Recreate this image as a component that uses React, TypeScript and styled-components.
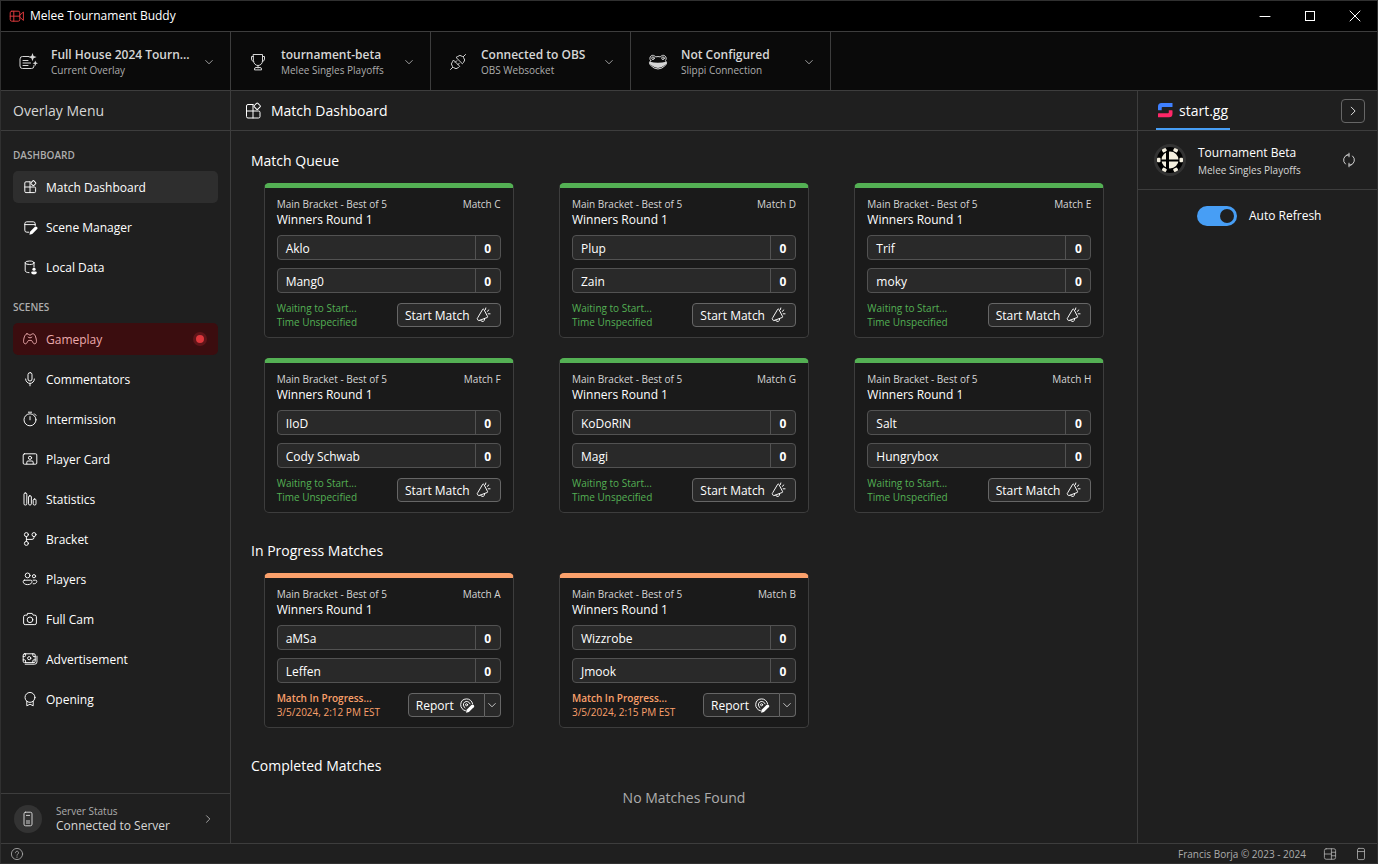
import React from "react";
import styled, { createGlobalStyle, css } from "styled-components";

const line = "#3d3d3d";
const green = "#54b054";
const orange = "#faa06b";

const GlobalStyle = createGlobalStyle`
  * { box-sizing: border-box; }
  body {
    margin: 0;
    background: #1f1f1f;
    color: #ffffff;
    font-family: "Segoe UI", "Open Sans", "Noto Sans", sans-serif;
    font-size: 12px;
    line-height: 16px;
  }
  button { font: inherit; color: inherit; cursor: pointer; }
  h1, h2, h3, p, ul { margin: 0; padding: 0; font-weight: 400; }
  ul { list-style: none; }
`;

/* ---------- icons ---------- */

const Svg = styled.svg<{ $size: number }>`
  width: ${(p) => p.$size}px;
  height: ${(p) => p.$size}px;
  flex: none;
  display: block;
  fill: none;
  stroke: currentColor;
  stroke-width: ${(p) => (p.$size < 20 ? 1.2 : 1)};
  stroke-linecap: round;
  stroke-linejoin: round;
  .solid { fill: currentColor; stroke: none; }
`;

const shapes = {
  recorder: (
    <>
      <rect x="1.500" y="4" width="12" height="12.500" rx="2" />
      <path d="M6 4v12.500M1.500 10.200h12M13.500 9l4.500-4v10.500l-4.500-4" />
    </>
  ),
  overlay: (
    <>
      <path d="M11 4.500H4.500a2.500 2.500 0 0 0-2.500 2.500v7a2.500 2.500 0 0 0 2.500 2.500h9a2.500 2.500 0 0 0 2.500-2.500v-.5M5 8.500h5M5 11h7.500M5 13.500h5" />
      <path className="solid" d="M14.500 1l1.100 3 3 1.100-3 1.100-1.100 3-1.100-3-3-1.100 3-1.100zM17.300 8.500l.8 2 2 .8-2 .8-.8 2-.8-2-2-.8 2-.8z" />
    </>
  ),
  trophy: (
    <path d="M5.500 2.500h9V9a4.500 4.500 0 0 1-9 0zM5.500 4.500H3.500v2.500a2.500 2.500 0 0 0 2.200 2.500M14.500 4.500h2v2.500a2.500 2.500 0 0 1-2.200 2.500M10 13.500v2.500M6.500 17.500v-.5a1.500 1.500 0 0 1 1.500-1.500h4a1.500 1.500 0 0 1 1.500 1.500v.5z" />
  ),
  plug: (
    <path d="M2.500 17.500l2.200-2.200M17.500 2.500l-2.200 2.200M5.700 8.300l6 6-1.200 1.200a3.600 3.600 0 0 1-5 0l-1-1a3.600 3.600 0 0 1 0-5zM8.300 5.700l6 6 1.200-1.200a3.600 3.600 0 0 0 0-5l-1-1a3.600 3.600 0 0 0-5 0zM7.300 10.200l1.500-1.500M9.800 12.700l1.500-1.500" />
  ),
  frog: (
    <>
      <path d="M2.600 8.500a3.100 3.100 0 1 1 5-3.600q2.400-.7 4.800 0a3.100 3.100 0 1 1 5 3.600q2.400 2.300.3 4.600Q14 17 10 17t-7.700-3.900Q.2 10.800 2.600 8.500z" />
      <circle cx="5" cy="6.200" r="1.300" />
      <circle cx="15" cy="6.200" r="1.300" />
      <path className="solid" d="M1.800 9.800q8.200 1.800 16.400 0 1 1.500-.9 3Q13.500 16 10 16t-7.300-3.200q-1.900-1.500-.9-3z" />
    </>
  ),
  dashboard: (
    <>
      <path d="M10 3.500H5A1.500 1.500 0 0 0 3.500 5v10.500A1.500 1.500 0 0 0 5 17h10.500a1.500 1.500 0 0 0 1.500-1.500v-4a1.500 1.500 0 0 0-1.500-1.500h-12M10 3.500V17" />
      <rect x="11.700" y="2.700" width="5" height="5" rx="1" transform="rotate(45 14.200 5.200)" />
    </>
  ),
  sceneEdit: (
    <>
      <path d="M8.500 16.500H6A2.500 2.500 0 0 1 3.500 14V6A2.500 2.500 0 0 1 6 3.500h8A2.500 2.500 0 0 1 16.500 6v2.500M3.500 7h13" />
      <path className="solid" d="M10 15.800l5.800-5.800a1.900 1.900 0 0 1 2.900 2.900L12.800 18.700l-3.500.9z" />
    </>
  ),
  database: (
    <>
      <ellipse cx="9.500" cy="4.700" rx="5.500" ry="2.200" />
      <path d="M4 4.700v10c0 1.300 2 2.300 4.800 2.400M15 4.700v4.800" />
      <circle className="solid" cx="15" cy="12.700" r="2" />
      <path className="solid" d="M11.500 17a1.500 1.500 0 0 1 1.500-1.500h4a1.500 1.500 0 0 1 1.500 1.500c0 1.500-1.500 2.500-3.500 2.500S11.500 18.500 11.500 17z" />
    </>
  ),
  gamepad: (
    <path d="M6.200 3.500c1.500 0 2 .5 2.600 1.500h2.400c.6-1 1.100-1.500 2.600-1.500 2.400 0 3.700 4.500 4.200 8 .3 2.600-.4 4.500-2.200 4.500-1.400 0-2.100-1.200-2.700-2.700-.4-1-1-1.500-2-1.500H8.900c-1 0-1.600.5-2 1.500C6.300 14.800 5.600 16 4.200 16 2.400 16 1.700 14.100 2 11.500c.5-3.500 1.800-8 4.200-8zM7.500 7.500c1 1.500 4 1.500 5 0" />
  ),
  mic: (
    <>
      <rect x="7.500" y="2" width="5" height="10.500" rx="2.500" />
      <path d="M4.500 10a5.500 5.500 0 0 0 11 0M10 15.500V18.500" />
    </>
  ),
  timer: (
    <>
      <circle cx="10" cy="11" r="7.500" />
      <path d="M10 7V11M8 1.500h4M15.500 3.500l2 2" />
    </>
  ),
  playerCard: (
    <>
      <rect x="1.500" y="3.500" width="17" height="13" rx="1.500" />
      <circle cx="10" cy="8.500" r="2" />
      <path d="M6 16v-2a1.500 1.500 0 0 1 1.500-1.500h5A1.500 1.500 0 0 1 14 14v2" />
    </>
  ),
  stats: (
    <>
      <rect x="2.500" y="2.500" width="3.500" height="15" rx="1.500" />
      <rect x="8.200" y="6" width="3.500" height="11.500" rx="1.500" />
      <rect x="14" y="10" width="3.500" height="7.500" rx="1.500" />
    </>
  ),
  branch: (
    <>
      <circle cx="5.500" cy="4.500" r="2.500" />
      <circle cx="15" cy="4.500" r="2.500" />
      <circle cx="5.500" cy="15.500" r="2.500" />
      <path d="M5.500 7v6M15 7v1a2.500 2.500 0 0 1-2.500 2.500h-7" />
    </>
  ),
  people: (
    <>
      <circle cx="7" cy="5.500" r="3" />
      <circle cx="15" cy="6.500" r="2" />
      <path d="M3 11.500h8A1.500 1.500 0 0 1 12.500 13c0 2.500-2.200 4-5.500 4s-5.500-1.500-5.500-4A1.500 1.500 0 0 1 3 11.500zM14 11.500h3a1.500 1.500 0 0 1 1.500 1.500c0 1.900-1.800 3.200-4.500 3" />
    </>
  ),
  camera: (
    <>
      <path d="M7.300 3h5.400l1.300 2.200h2a2 2 0 0 1 2 2V15a2 2 0 0 1-2 2H4a2 2 0 0 1-2-2V7.200a2 2 0 0 1 2-2h2z" />
      <circle cx="10" cy="11" r="3.500" />
    </>
  ),
  money: (
    <>
      <rect x="1.500" y="3.500" width="15" height="11" rx="1.500" />
      <circle cx="9" cy="9" r="2" />
      <path d="M1.500 7H3a1.500 1.500 0 0 0 1.500-1.500v-2M13.500 3.500v2A1.500 1.500 0 0 0 15 7h1.500M1.500 11H3a1.500 1.500 0 0 1 1.500 1.500v2M13.500 14.500v-2A1.500 1.500 0 0 1 15 11h1.500M18.700 6.500V13.500a3 3 0 0 1-3 3H4" />
    </>
  ),
  ribbon: (
    <>
      <circle cx="10" cy="8" r="6.200" />
      <path d="M6 13v5.500l4-2 4 2v-5.500" />
    </>
  ),
  server: (
    <>
      <rect x="5" y="1.500" width="10" height="17" rx="2" />
      <path d="M8 5.500h4M8 12.500h4M8 15h4" />
    </>
  ),
  chevronDown: <path d="M4.500 7.500L10 13l5.500-5.500" />,
  chevronRight: <path d="M7.500 4.500L13 10l-5.500 5.500" />,
  megaphone: (
    <path d="M9.300 3.200a1 1 0 0 1 1.800-.2l4.600 8.800a1 1 0 0 1-.7 1.400l-10 3.800a1 1 0 0 1-1.200-.5l-.9-1.700a1 1 0 0 1 .2-1.200zM7 16.400a2.500 2.500 0 0 0 4.900-1.800M13 3.200l.5-2M15.300 5.500l2-1.800M16.500 8.500h2.300" />
  ),
  reportEdit: (
    <>
      <path d="M8 17.200a7.500 7.500 0 1 1 9-8.700" />
      <path d="M7.500 13.500a4.300 4.300 0 1 1 6.300-5" />
      <circle cx="9.500" cy="9.700" r="1.300" />
      <path className="solid" d="M9.500 16l6-6a1.900 1.900 0 0 1 2.900 2.900l-6 6-3.600.9z" />
    </>
  ),
  sync: (
    <path d="M8 3.700A6.600 6.600 0 0 0 5.500 15M12 16.300A6.600 6.600 0 0 0 14.500 5M7.500 3.700h2.500M10 1.500v4.500M12.500 16.300H10M10 14v4.500" />
  ),
  help: (
    <>
      <circle cx="10" cy="10" r="8" />
      <path d="M7.800 8.200a2.200 2.200 0 1 1 3.400 1.800c-.8.500-1.200 1-1.200 1.800" />
      <circle className="solid" cx="10" cy="14.300" r=".9" />
    </>
  ),
  board: (
    <>
      <rect x="2" y="2.500" width="16" height="15" rx="2.500" />
      <path d="M12 2.500v15M2 10h10M12 7.500h6M12 12.500h6" />
    </>
  ),
  panel: (
    <>
      <rect x="5" y="2" width="10" height="16" rx="2" />
      <path d="M5 6.500h10" />
    </>
  ),
  minimize: <path d="M5 10.500h10" />,
  maximize: <rect x="5.500" y="5.500" width="9" height="9" strokeLinejoin="miter" />,
  close: <path d="M5 5l10 10M15 5L5 15" />,
};

type IconName = keyof typeof shapes;

function Icon({ name, size = 16 }: { name: IconName; size?: number }) {
  return (
    <Svg $size={size} viewBox="0 0 20 20" aria-hidden="true">
      {shapes[name]}
    </Svg>
  );
}

/* ---------- frame ---------- */

const Frame = styled.div`
  display: flex;
  flex-direction: column;
  min-height: 100vh;
  border: 1px solid #303030;
`;

const TitleBar = styled.header`
  display: flex;
  align-items: center;
  height: 31px;
  background: #000;
  border-bottom: 1px solid ${line};
`;

const AppName = styled.h1`
  flex: 1;
  font-size: 12px;
`;

const Brand = styled.span`
  margin: 0 5px 0 8px;
  color: #e0393e;
`;

const WindowButton = styled.button`
  display: grid;
  place-items: center;
  width: 45px;
  height: 30px;
  padding: 0;
  border: 0;
  background: none;
`;

const Toolbar = styled.div`
  display: flex;
  height: 59px;
  background: #0a0a0a;
  border-bottom: 1px solid ${line};
`;

const Connection = styled.button<{ $wide?: boolean }>`
  display: flex;
  align-items: center;
  width: ${(p) => (p.$wide ? 230 : 200)}px;
  padding: 1px 15px 0 17px;
  border: 0;
  border-right: 1px solid ${line};
  background: none;
  color: #d6d6d6;
  text-align: left;
`;

const ConnectionText = styled.span`
  flex: 1;
  min-width: 0;
  padding: 1px 0 0 13px;
`;

const ConnectionName = styled.span`
  display: block;
  font-weight: 600;
  line-height: 16px;
  white-space: nowrap;
`;

const Caption = styled.span`
  display: block;
  color: #adadad;
  font-size: 10px;
  line-height: 14px;
`;

const Body = styled.div`
  display: flex;
  flex: 1;
`;

const PaneHeader = styled.div`
  display: flex;
  align-items: center;
  height: 40px;
  border-bottom: 1px solid ${line};
  font-size: 14px;
  line-height: 20px;
`;

/* ---------- sidebar ---------- */

const Sidebar = styled.aside`
  display: flex;
  flex-direction: column;
  flex: none;
  width: 230px;
  border-right: 1px solid ${line};
`;

const MenuHeader = styled(PaneHeader)`
  padding-left: 12px;
  color: #d6d6d6;
`;

const Nav = styled.nav`
  flex: 1;
  padding: 16px 12px 0;
`;

const NavHeading = styled.h2`
  margin-bottom: 8px;
  color: #adadad;
  font-size: 10px;
  font-weight: 600;
  line-height: 16px;
`;

const NavList = styled.ul`
  display: flex;
  flex-direction: column;
  gap: 8px;
  margin-bottom: 16px;
`;

const NavItem = styled.a<{ $state?: "selected" | "live" }>`
  display: flex;
  align-items: center;
  gap: 8px;
  height: 32px;
  padding: 0 11px 0 9px;
  border-radius: 5px;
  color: #fff;
  text-decoration: none;
  ${(p) => p.$state === "selected" && css`background: #2e2e2e;`}
  ${(p) => p.$state === "live" && css`background: #3b0d0f; color: #ebaaac;`}
`;

const Label = styled.span`
  flex: 1;
  padding-top: 2px;
  white-space: nowrap;
`;

const LiveDot = styled.span`
  width: 14px;
  height: 14px;
  border: 3px solid #5f1519;
  border-radius: 50%;
  background: #dc373c;
`;

const ServerStatus = styled.button`
  display: flex;
  align-items: center;
  height: 50px;
  padding: 0 16px 0 13px;
  border: 0;
  border-top: 1px solid ${line};
  background: none;
  color: #d6d6d6;
  text-align: left;
`;

const ServerBadge = styled.span`
  display: grid;
  place-items: center;
  width: 28px;
  height: 28px;
  border-radius: 50%;
  background: #333;
`;

const ServerText = styled.span`
  flex: 1;
  padding-left: 14px;
`;

/* ---------- main ---------- */

const Main = styled.main`
  flex: 1;
  min-width: 0;
`;

const MainHeader = styled(PaneHeader)`
  gap: 8px;
  padding-left: 12px;
`;

const Sections = styled.div`
  display: flex;
  flex-direction: column;
  gap: 28px;
  padding: 20px 10px 28px;
`;

const SectionTitle = styled.h2`
  padding-left: 10px;
  margin-bottom: 12px;
  font-size: 14px;
  line-height: 20px;
`;

const CardGrid = styled.div`
  display: grid;
  grid-template-columns: repeat(auto-fill, minmax(270px, 1fr));
  row-gap: 20px;
  justify-items: center;
`;

const Card = styled.article<{ $accent: string }>`
  width: 250px;
  padding: 9px 12px 8px;
  border: 1px solid ${line};
  border-top: 5px solid ${(p) => p.$accent};
  border-radius: 5px;
  background: #1a1a1a;
`;

const CardMeta = styled.div`
  display: flex;
  justify-content: space-between;
  color: #d6d6d6;
  font-size: 10px;
  line-height: 15px;
`;

const RoundName = styled.h3`
  margin-bottom: 8px;
  font-size: 12px;
  line-height: 15px;
`;

const Player = styled.div`
  display: flex;
  height: 25px;
  margin-bottom: 8px;
  border: 1px solid #525252;
  border-radius: 4px;
  background: #292929;
  line-height: 25px;
`;

const PlayerName = styled.span`
  flex: 1;
  padding-left: 8px;
`;

const Score = styled.span`
  width: 25px;
  border-left: 1px solid #525252;
  font-weight: 700;
  text-align: center;
`;

const CardFooter = styled.div`
  display: flex;
  align-items: center;
  justify-content: space-between;
  height: 28px;
`;

const Status = styled.p<{ $accent: string; $strong?: boolean }>`
  color: ${(p) => p.$accent};
  font-size: 10px;
  line-height: 14px;
  span { display: block; }
  span:first-child { font-weight: ${(p) => (p.$strong ? 600 : 400)}; }
`;

const buttonBox = css`
  display: flex;
  align-items: center;
  justify-content: center;
  height: 24px;
  border: 1px solid #666;
  border-radius: 4px;
  background: #292929;
`;

const ActionButton = styled.button`
  ${buttonBox}
  gap: 5px;
  padding: 0 9px 0 7px;
`;

const SplitButton = styled.div`
  display: flex;
  ${ActionButton} {
    border-radius: 4px 0 0 4px;
  }
`;

const SplitMenu = styled.button`
  ${buttonBox}
  width: 16px;
  padding: 0;
  border-left: 0;
  border-radius: 0 4px 4px 0;
`;

const Empty = styled.p`
  color: #adadad;
  font-size: 14px;
  line-height: 20px;
  text-align: center;
`;

/* ---------- right panel ---------- */

const Panel = styled.aside`
  flex: none;
  width: 240px;
  border-left: 1px solid ${line};
`;

const PanelHeader = styled(PaneHeader)`
  justify-content: space-between;
  padding: 0 12px 0 18px;
`;

const Tab = styled.button`
  display: flex;
  align-items: center;
  gap: 6px;
  height: 39px;
  padding: 2px 2px 0;
  border: 0;
  border-bottom: 2px solid #479ef5;
  background: none;
`;

const CollapseButton = styled.button`
  ${buttonBox}
  width: 24px;
  padding: 0;
  background: #1f1f1f;
`;

const TournamentRow = styled.div`
  display: flex;
  align-items: center;
  height: 59px;
  padding: 0 20px 0 16px;
  border-bottom: 1px solid ${line};
`;

const TournamentText = styled.div`
  display: flex;
  flex: 1;
  flex-direction: column;
  gap: 2px;
  padding: 2px 0 0 12px;
`;

const BrightCaption = styled(Caption)`
  color: #d6d6d6;
`;

const IconButton = styled.button`
  padding: 0;
  border: 0;
  background: none;
  color: #d6d6d6;
`;

const ToggleLabel = styled.label`
  display: flex;
  align-items: center;
  gap: 12px;
  padding: 16px 0 0 59px;
`;

const Toggle = styled.input`
  appearance: none;
  display: flex;
  align-items: center;
  width: 40px;
  height: 20px;
  margin: 0;
  padding: 0 3px;
  border-radius: 10px;
  background: #616161;
  &::before {
    content: "";
    width: 14px;
    height: 14px;
    border-radius: 50%;
    background: #1f1f1f;
  }
  &:checked {
    justify-content: flex-end;
    background: #479ef5;
  }
`;

const Footer = styled.footer`
  display: flex;
  align-items: center;
  gap: 17px;
  height: 20px;
  padding: 0 9px;
  border-top: 1px solid ${line};
  color: #adadad;
  font-size: 10px;
`;

const Copyright = styled.span`
  margin-left: auto;
`;

function StartLogo() {
  return (
    <svg width="15" height="15" viewBox="0 0 15 15" aria-hidden="true">
      <path d="M3.500 0H14.500V3.500a.5.500 0 0 1-.5.500H4.500A.8.800 0 0 0 3.700 4.800V7.200H.5A.5.500 0 0 1 0 6.700V3.500A3.500 3.500 0 0 1 3.500 0z" fill="#3f80ff" />
      <path d="M11 14.200H0V10.700a.5.500 0 0 1 .5-.5H10a.8.800 0 0 0 .8-.8V7.200h3.200a.5.500 0 0 1 .5.500v3A3.500 3.500 0 0 1 11 14.200z" fill="#ff2768" />
    </svg>
  );
}

function TournamentAvatar() {
  const ticks = [0, 60, 120, 180, 240, 300];
  return (
    <svg width="32" height="32" viewBox="0 0 32 32" aria-hidden="true">
      <circle cx="16" cy="16" r="16" fill="#333" />
      <circle cx="16" cy="16" r="13" fill="#000" />
      <circle cx="16" cy="16" r="8.500" fill="#f4efdf" />
      {ticks.map((angle) => (
        <rect key={angle} x="25.500" y="13.800" width="3.500" height="4.400" rx="1" fill="#f4efdf" transform={`rotate(${angle} 16 16)`} />
      ))}
      <path d="M13.500 7v18" stroke="#000" strokeWidth="3" />
      <path d="M7 16.500h18" stroke="#000" strokeWidth="2" />
    </svg>
  );
}

/* ---------- data ---------- */

type NavEntry = { icon: IconName; label: string; state?: "selected" | "live" };

const dashboardItems: NavEntry[] = [
  { icon: "dashboard", label: "Match Dashboard", state: "selected" },
  { icon: "sceneEdit", label: "Scene Manager" },
  { icon: "database", label: "Local Data" },
];

const sceneItems: NavEntry[] = [
  { icon: "gamepad", label: "Gameplay", state: "live" },
  { icon: "mic", label: "Commentators" },
  { icon: "timer", label: "Intermission" },
  { icon: "playerCard", label: "Player Card" },
  { icon: "stats", label: "Statistics" },
  { icon: "branch", label: "Bracket" },
  { icon: "people", label: "Players" },
  { icon: "camera", label: "Full Cam" },
  { icon: "money", label: "Advertisement" },
  { icon: "ribbon", label: "Opening" },
];

const connections: { icon: IconName; name: string; caption: string }[] = [
  { icon: "overlay", name: "Full House 2024 Tourn...", caption: "Current Overlay" },
  { icon: "trophy", name: "tournament-beta", caption: "Melee Singles Playoffs" },
  { icon: "plug", name: "Connected to OBS", caption: "OBS Websocket" },
  { icon: "frog", name: "Not Configured", caption: "Slippi Connection" },
];

type Match = { id: string; players: [string, string]; startedAt?: string };

const queue: Match[] = [
  { id: "C", players: ["Aklo", "Mang0"] },
  { id: "D", players: ["Plup", "Zain"] },
  { id: "E", players: ["Trif", "moky"] },
  { id: "F", players: ["IIoD", "Cody Schwab"] },
  { id: "G", players: ["KoDoRiN", "Magi"] },
  { id: "H", players: ["Salt", "Hungrybox"] },
];

const inProgress: Match[] = [
  { id: "A", players: ["aMSa", "Leffen"], startedAt: "3/5/2024, 2:12 PM EST" },
  { id: "B", players: ["Wizzrobe", "Jmook"], startedAt: "3/5/2024, 2:15 PM EST" },
];

/* ---------- parts ---------- */

function NavGroup({ title, items }: { title: string; items: NavEntry[] }) {
  return (
    <>
      <NavHeading>{title}</NavHeading>
      <NavList>
        {items.map((item) => (
          <li key={item.label}>
            <NavItem href="#" $state={item.state}>
              <Icon name={item.icon} />
              <Label>{item.label}</Label>
              {item.state === "live" && <LiveDot />}
            </NavItem>
          </li>
        ))}
      </NavList>
    </>
  );
}

function MatchCard({ match }: { match: Match }) {
  const accent = match.startedAt ? orange : green;
  return (
    <Card $accent={accent}>
      <CardMeta>
        <span>Main Bracket - Best of 5</span>
        <span>Match {match.id}</span>
      </CardMeta>
      <RoundName>Winners Round 1</RoundName>
      {match.players.map((name) => (
        <Player key={name}>
          <PlayerName>{name}</PlayerName>
          <Score>0</Score>
        </Player>
      ))}
      <CardFooter>
        <Status $accent={accent} $strong={!!match.startedAt}>
          <span>{match.startedAt ? "Match In Progress..." : "Waiting to Start..."}</span>
          <span>{match.startedAt ?? "Time Unspecified"}</span>
        </Status>
        {match.startedAt ? (
          <SplitButton>
            <ActionButton>
              <Label>Report</Label>
              <Icon name="reportEdit" />
            </ActionButton>
            <SplitMenu aria-label="More report options">
              <Icon name="chevronDown" size={12} />
            </SplitMenu>
          </SplitButton>
        ) : (
          <ActionButton>
            <Label>Start Match</Label>
            <Icon name="megaphone" />
          </ActionButton>
        )}
      </CardFooter>
    </Card>
  );
}

export default function App() {
  return (
    <Frame>
      <GlobalStyle />
      <TitleBar>
        <Brand><Icon name="recorder" /></Brand>
        <AppName>Melee Tournament Buddy</AppName>
        <WindowButton aria-label="Minimize"><Icon name="minimize" size={20} /></WindowButton>
        <WindowButton aria-label="Maximize"><Icon name="maximize" size={20} /></WindowButton>
        <WindowButton aria-label="Close"><Icon name="close" size={20} /></WindowButton>
      </TitleBar>
      <Toolbar>
        {connections.map((c, i) => (
          <Connection key={c.name} $wide={i === 0}>
            <Icon name={c.icon} size={20} />
            <ConnectionText>
              <ConnectionName>{c.name}</ConnectionName>
              <Caption>{c.caption}</Caption>
            </ConnectionText>
            <Icon name="chevronDown" size={12} />
          </Connection>
        ))}
      </Toolbar>
      <Body>
        <Sidebar>
          <MenuHeader>Overlay Menu</MenuHeader>
          <Nav>
            <NavGroup title="DASHBOARD" items={dashboardItems} />
            <NavGroup title="SCENES" items={sceneItems} />
          </Nav>
          <ServerStatus>
            <ServerBadge><Icon name="server" /></ServerBadge>
            <ServerText>
              <Caption>Server Status</Caption>
              Connected to Server
            </ServerText>
            <Icon name="chevronRight" size={12} />
          </ServerStatus>
        </Sidebar>
        <Main>
          <MainHeader>
            <Icon name="dashboard" size={20} />
            Match Dashboard
          </MainHeader>
          <Sections>
            <section>
              <SectionTitle>Match Queue</SectionTitle>
              <CardGrid>{queue.map((m) => <MatchCard key={m.id} match={m} />)}</CardGrid>
            </section>
            <section>
              <SectionTitle>In Progress Matches</SectionTitle>
              <CardGrid>{inProgress.map((m) => <MatchCard key={m.id} match={m} />)}</CardGrid>
            </section>
            <section>
              <SectionTitle>Completed Matches</SectionTitle>
              <Empty>No Matches Found</Empty>
            </section>
          </Sections>
        </Main>
        <Panel>
          <PanelHeader>
            <Tab>
              <StartLogo />
              start.gg
            </Tab>
            <CollapseButton aria-label="Collapse panel"><Icon name="chevronRight" size={14} /></CollapseButton>
          </PanelHeader>
          <TournamentRow>
            <TournamentAvatar />
            <TournamentText>
              <span>Tournament Beta</span>
              <BrightCaption>Melee Singles Playoffs</BrightCaption>
            </TournamentText>
            <IconButton aria-label="Refresh"><Icon name="sync" /></IconButton>
          </TournamentRow>
          <ToggleLabel>
            <Toggle type="checkbox" role="switch" defaultChecked />
            Auto Refresh
          </ToggleLabel>
        </Panel>
      </Body>
      <Footer>
        <Icon name="help" size={14} />
        <Copyright>Francis Borja © 2023 - 2024</Copyright>
        <Icon name="board" size={14} />
        <Icon name="panel" size={14} />
      </Footer>
    </Frame>
  );
}
